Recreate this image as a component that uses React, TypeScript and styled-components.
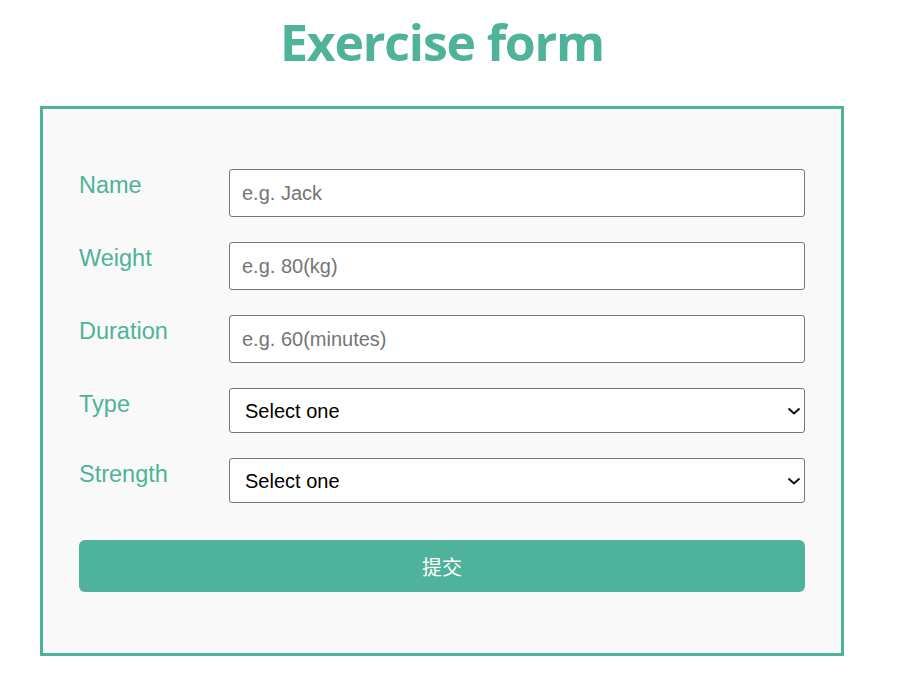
import React from "react";
import styled, { createGlobalStyle } from "styled-components";

const GREEN = "#4fb29a";

const Global = createGlobalStyle`
  html, body { margin: 0; padding: 0; background: #ffffff; }
  body { font-family: "Liberation Sans", Arial, sans-serif; }
  * { box-sizing: border-box; }
`;

const Page = styled.div`
  width: 804px;
  margin-left: 40px;
  display: flex;
  flex-direction: column;
`;

const Title = styled.h1`
  margin: 12px 0 34px;
  text-align: center;
  font-family: "Open Sans", "Noto Sans", sans-serif;
  font-weight: 700;
  font-size: 50px;
  letter-spacing: -1.2px;
  line-height: 60px;
  color: ${GREEN};
`;

const FormBox = styled.form`
  border: 3px solid ${GREEN};
  background: #f9f9f9;
  padding: 60px 36px 61px;
  display: flex;
  flex-direction: column;
`;

const Row = styled.div`
  display: grid;
  grid-template-columns: 150px 576px;
  align-items: start;
  margin-bottom: 25px;
`;

const Label = styled.label`
  color: ${GREEN};
  font-size: 23.5px;
  line-height: 28px;
  padding-top: 2px;
`;

const TextInput = styled.input`
  height: 48px;
  width: 100%;
  border: 1px solid #767676;
  border-radius: 3px;
  background: #fff;
  padding: 0 12px;
  font-family: "Liberation Sans", Arial, sans-serif;
  font-size: 20px;
  color: #000;
  &::placeholder { color: #757575; }
`;

const SelectWrap = styled.div`
  position: relative;
  width: 100%;
`;

const Select = styled.select`
  appearance: none;
  -webkit-appearance: none;
  display: block;
  height: 45px;
  width: 100%;
  border: 1px solid #767676;
  border-radius: 3px;
  background: #fff;
  padding: 0 40px 0 15px;
  font-family: "Liberation Sans", Arial, sans-serif;
  font-size: 20px;
  color: #000;
`;

const Chevron = styled.svg`
  position: absolute;
  right: 4px;
  top: 50%;
  transform: translateY(-50%);
  width: 14px;
  height: 8px;
  pointer-events: none;
`;

const SubmitButton = styled.button`
  margin-top: 12px;
  height: 52px;
  width: 726px;
  border: none;
  border-radius: 6px;
  background: ${GREEN};
  color: #fff;
  font-family: "Noto Sans CJK SC", sans-serif;
  font-size: 20px;
  cursor: pointer;
`;

const fields = [
  { label: "Name", placeholder: "e.g. Jack" },
  { label: "Weight", placeholder: "e.g. 80(kg)" },
  { label: "Duration", placeholder: "e.g. 60(minutes)" },
];

const selects = [
  { label: "Type", options: ["Running", "Swimming", "Cycling"] },
  { label: "Strength", options: ["Low", "Medium", "High"] },
];

export default function App() {
  return (
    <>
      <Global />
      <Page>
        <Title>Exercise form</Title>
        <FormBox onSubmit={(e) => e.preventDefault()}>
          {fields.map((f) => (
            <Row key={f.label}>
              <Label>{f.label}</Label>
              <TextInput placeholder={f.placeholder} />
            </Row>
          ))}
          {selects.map((s) => (
            <Row key={s.label}>
              <Label>{s.label}</Label>
              <SelectWrap>
                <Select defaultValue="">
                  <option value="">Select one</option>
                  {s.options.map((o) => (
                    <option key={o} value={o}>
                      {o}
                    </option>
                  ))}
                </Select>
                <Chevron viewBox="0 0 14 8" aria-hidden="true">
                  <path d="M1.5 1.5 L7 6.5 L12.5 1.5" fill="none" stroke="#111" strokeWidth="2" />
                </Chevron>
              </SelectWrap>
            </Row>
          ))}
          <SubmitButton type="submit">提交</SubmitButton>
        </FormBox>
      </Page>
    </>
  );
}
